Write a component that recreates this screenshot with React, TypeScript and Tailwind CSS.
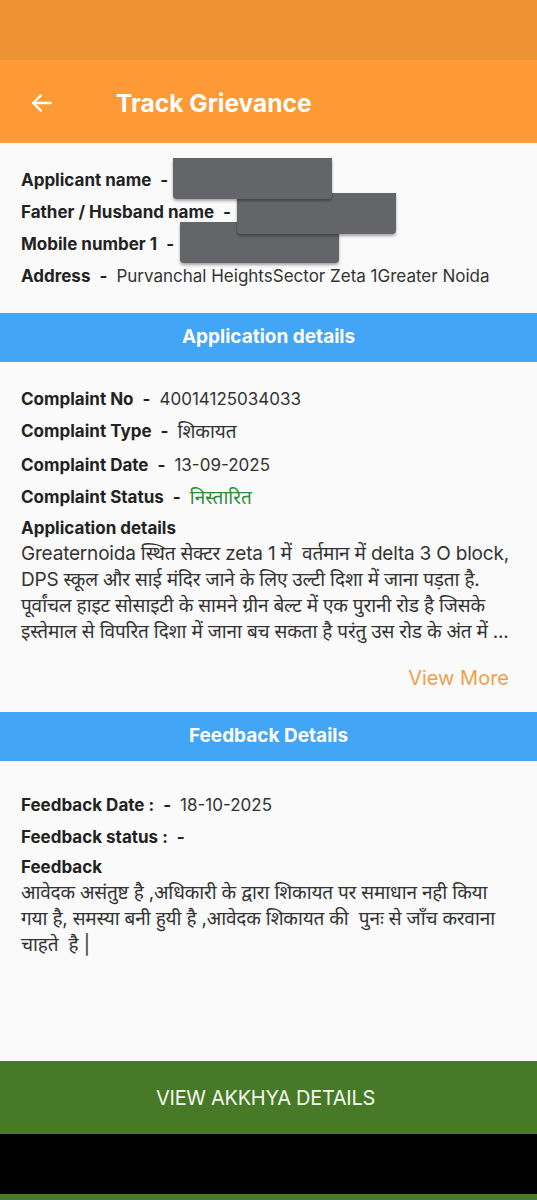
import React from 'react';

const font = "font-['Inter','Noto_Sans','Noto_Sans_Devanagari','Lohit_Devanagari','FreeSans',sans-serif]";

function Row({ label, value, valueClass = 'text-[#333]' }: { label: string; value?: string; valueClass?: string }) {
  return (
    <div className="h-[32px] flex items-center text-[17px] whitespace-nowrap">
      <span className="font-bold text-[#222]">{label}</span>
      <span className="font-bold text-[#222] mx-[9px]">-</span>
      {value && <span className={valueClass}>{value}</span>}
    </div>
  );
}

function SectionBar({ title }: { title: string }) {
  return (
    <div className="h-[49px] bg-[#42A5F5] flex items-center justify-center">
      <span className="text-white font-bold text-[19px]">{title}</span>
    </div>
  );
}

const appLines = [
  'Greaternoida स्थित सेक्टर zeta 1 में  वर्तमान में delta 3 O block,',
  'DPS स्कूल और साई मंदिर जाने के लिए उल्टी दिशा में जाना पड़ता है.',
  'पूर्वांचल हाइट सोसाइटी के सामने ग्रीन बेल्ट में एक पुरानी रोड है जिसके',
  'इस्तेमाल से विपरित दिशा में जाना बच सकता है परंतु उस रोड के अंत में ...',
];

const feedbackLines = [
  'आवेदक असंतुष्ट है ,अधिकारी के द्वारा शिकायत पर समाधान नही किया',
  'गया है, समस्या बनी हुयी है ,आवेदक शिकायत की  पुनः से जाँच करवाना',
  'चाहते  है |',
];

export default function App() {
  return (
    <div className={`w-[537px] h-[1200px] flex flex-col bg-[#FAFAFA] ${font}`}>
      {/* status bar */}
      <div className="h-[60px] bg-[#EE9334] shrink-0" />

      {/* app bar */}
      <div className="h-[83px] bg-[#FE9A35] flex items-center pt-[3px] shrink-0">
        <svg className="ml-[29px]" width="26" height="26" viewBox="0 0 24 24" fill="none" stroke="white" strokeWidth="2.2" strokeLinecap="round" strokeLinejoin="round">
          <path d="M20 12H4" />
          <path d="M11 5l-7 7 7 7" />
        </svg>
        <span className="ml-[61px] text-white font-bold text-[24.5px]">Track Grievance</span>
      </div>

      <div className="flex-1 flex flex-col">
        {/* applicant */}
        <div className="relative pl-[21px] pt-[22px] pb-[20px]">
          <Row label="Applicant name" />
          <Row label="Father / Husband name" />
          <Row label="Mobile number 1" />
          <Row label="Address" value="Purvanchal HeightsSector Zeta 1Greater Noida" />
          {/* redaction boxes */}
          <div className="absolute left-[180px] top-[79px] w-[159px] h-[41px] bg-[#646568] rounded-b-[4px] shadow-[0_2px_3px_rgba(0,0,0,0.35)]" />
          <div className="absolute left-[237px] top-[50px] w-[159px] h-[41px] bg-[#646568] rounded-b-[4px] shadow-[0_2px_3px_rgba(0,0,0,0.35)]" />
          <div className="absolute left-[173px] top-[15px] w-[159px] h-[41px] bg-[#646568] rounded-b-[4px] shadow-[0_2px_3px_rgba(0,0,0,0.35)]" />
        </div>

        <SectionBar title="Application details" />

        <div className="pl-[21px] pr-[28px] pt-[22px]">
          <Row label="Complaint No" value="40014125034033" />
          <Row label="Complaint Type" value="शिकायत" valueClass="text-[#333] text-[19px]" />
          <div className="mt-[2px]">
            <Row label="Complaint Date" value="13-09-2025" />
          </div>
          <Row label="Complaint Status" value="निस्तारित" valueClass="text-[#2E8B3A] text-[19px]" />
          <div className="text-[17px] leading-[26px] text-[#222] font-bold mt-[1px]">Application details</div>
          <div className="text-[19px] leading-[26px] text-[#333] tracking-[-0.2px]">
            {appLines.map((l, i) => (
              <div key={i} className="whitespace-pre">{l}</div>
            ))}
          </div>
          <div className="flex justify-end mt-[19px] mb-[20px]">
            <span className="text-[20px] leading-[28px] text-[#F0A04B]">View More</span>
          </div>
        </div>

        <SectionBar title="Feedback Details" />

        <div className="pl-[21px] pr-[28px] pt-[29px]">
          <Row label="Feedback Date :" value="18-10-2025" />
          <Row label="Feedback status :" />
          <div className="text-[17px] leading-[26px] text-[#222] font-bold">Feedback</div>
          <div className="text-[19px] leading-[26px] text-[#333] tracking-[-0.2px]">
            {feedbackLines.map((l, i) => (
              <div key={i} className="whitespace-pre">{l}</div>
            ))}
          </div>
        </div>
      </div>

      {/* bottom button */}
      <button className="h-[73px] bg-[#477A26] text-[#F2F7EE] text-[20px] tracking-[-0.3px] pr-[6px] shrink-0">
        VIEW AKKHYA DETAILS
      </button>
      <div className="h-[60px] bg-black shrink-0" />
      <div className="h-[6px] bg-[#477A26] shrink-0" />
    </div>
  );
}
